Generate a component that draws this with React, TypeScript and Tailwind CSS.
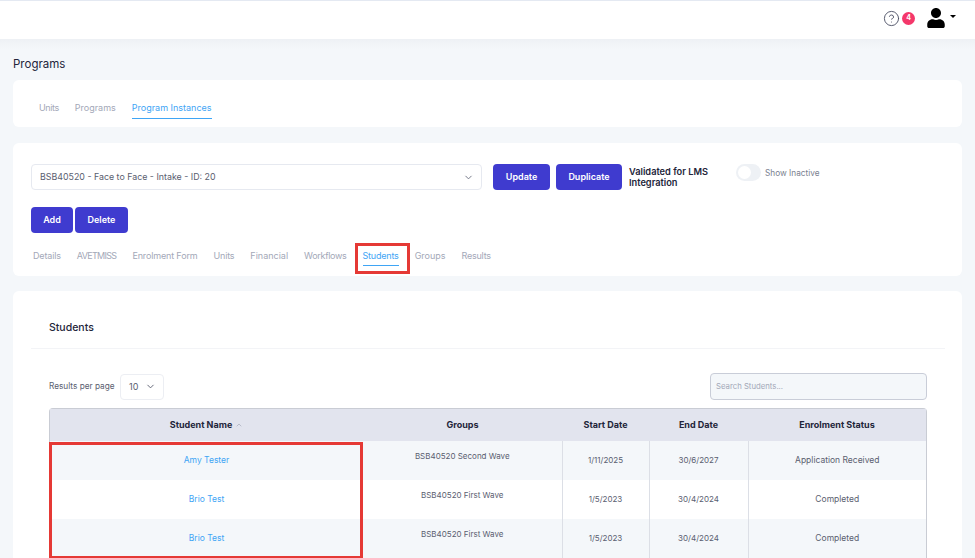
import React from "react";
import { ChevronDown, ChevronUp, CircleHelp } from "lucide-react";
import { FaUser } from "react-icons/fa";

const font = "font-['Inter','Open_Sans',sans-serif]";

function Tab({ label, active, boxed, track = "" }: { label: string; active?: boolean; boxed?: boolean; track?: string }) {
  return (
    <div className="relative">
      <div className={`${boxed ? "pb-[2px]" : "pb-[3px]"} border-b text-[9px] leading-[14px] ${track} ${active ? "text-[#3fa5f5] border-[#3fa5f5]" : "text-[#a3a8b8] border-transparent"}`}>
        {label}
      </div>
      {boxed && <div className="absolute left-[-8px] right-[-11px] top-[-6px] h-[31px] border-[3px] border-[#e53935]" />}
    </div>
  );
}

function Btn({ label, w }: { label: string; w: string }) {
  return (
    <div className={`${w} h-[26px] rounded-[4px] bg-[#3f3bcf] text-white text-[9px] font-semibold flex items-center justify-center`}>
      {label}
    </div>
  );
}

const rows = [
  ["Amy Tester", "BSB40520 Second Wave", "1/11/2025", "30/6/2027", "Application Received"],
  ["Brio Test", "BSB40520 First Wave", "1/5/2023", "30/4/2024", "Completed"],
  ["Brio Test", "BSB40520 First Wave", "1/5/2023", "30/4/2024", "Completed"],
];

export default function App() {
  return (
    <div className={`${font} relative h-[558px] w-[975px] overflow-hidden bg-[#f4f7fa]`}>
      <header className="h-[39px] bg-white border-t-[1px] border-[#e4e9f2] flex items-center justify-end pr-[19px] pb-[4px]">
        <CircleHelp size={17} strokeWidth={1.3} className="text-[#4a4f63]" />
        <div className="ml-[2px] w-[13px] h-[13px] rounded-full bg-[#f4376a] text-white text-[7px] font-bold flex items-center justify-center">4</div>
        <FaUser size={20} className="ml-[11px] text-black" />
        <div className="ml-[4px] mb-[4px] w-0 h-0 border-x-[3px] border-x-transparent border-t-[3px] border-t-black" />
      </header>

      <div className="h-[10px] -mb-[10px] bg-gradient-to-b from-[#eef1f5] to-[#f4f7fa]" />

      <main className="pl-[13px] w-[962px] box-border">
        <h1 className="pt-[17px] h-[41px] text-[11.5px] leading-[16px] text-[#23253a]">Programs</h1>

        <section className="h-[47px] bg-white rounded-[6px] pl-[26px] pt-[21px] flex gap-[16px]">
          <Tab label="Units" track="tracking-[-0.4px]" />
          <Tab label="Programs" />
          <Tab label="Program Instances" active />
        </section>

        <section className="mt-[16px] h-[133px] bg-white rounded-[6px] pl-[18px] pt-[21px]">
          <div className="flex items-start">
            <div className="w-[451px] h-[26px] rounded-[4px] border border-[#e6e9f0] flex items-center justify-between pl-[8px] pr-[7px] text-[8.85px] text-[#5a5e70]">
              <span>BSB40520 - Face to Face - Intake - ID: 20</span>
              <ChevronDown size={11} className="text-[#6b7080]" />
            </div>
            <div className="ml-[11px]"><Btn label="Update" w="w-[57px]" /></div>
            <div className="ml-[6px]"><Btn label="Duplicate" w="w-[66px]" /></div>
            <div className="ml-[7px] w-[96px] text-[9.25px] leading-[11px] font-semibold text-[#23253a] pt-[2px]">Validated for LMS Integration</div>
            <div className="ml-[11px] w-[25px] h-[17px] rounded-full bg-[#eef1f5] flex items-center pl-[2px]">
              <div className="w-[13px] h-[13px] rounded-full bg-white" />
            </div>
            <div className="ml-[4px] text-[8.25px] leading-[17px] text-[#7a7f90] mt-[1px]">Show Inactive</div>
          </div>

          <div className="mt-[17px] flex gap-[2px]">
            <Btn label="Add" w="w-[42px]" />
            <Btn label="Delete" w="w-[53px]" />
          </div>

          <div className="mt-[16px] ml-[2px] flex gap-[16px]">
            <Tab label="Details" track="tracking-[-0.15px]" />
            <Tab label="AVETMISS" track="tracking-[-0.7px]" />
            <Tab label="Enrolment Form" track="tracking-[-0.15px]" />
            <Tab label="Units" track="tracking-[-0.2px]" />
            <Tab label="Financial" />
            <Tab label="Workflows" track="tracking-[-0.3px]" />
            <Tab label="Students" active boxed track="tracking-[-0.2px]" />
            <Tab label="Groups" />
            <Tab label="Results" track="tracking-[-0.25px]" />
          </div>
        </section>

        <section className="mt-[15px] h-[280px] bg-white rounded-t-[6px] pl-[18px] pr-[17px]">
          <h2 className="pt-[30px] h-[58px] pl-[18px] text-[10.5px] leading-[14px] font-medium text-[#23253a] border-b border-[#f3f4f7]">Students</h2>

          <div className="mt-[24px] px-[18px] flex items-center justify-between">
            <div className="flex items-center">
              <span className="text-[8.25px] text-[#5a5e70] w-[71px]">Results per page</span>
              <div className="w-[44px] h-[26px] rounded-[4px] border border-[#eceef3] flex items-center justify-between pl-[8px] pr-[7px] text-[9px] text-[#5a5e70]">
                <span>10</span>
                <ChevronDown size={11} />
              </div>
            </div>
            <div className="w-[217px] h-[27px] rounded-[4px] border border-[#c9cdd8] bg-[#f4f7fa] flex items-center pl-[5px] text-[7.75px] text-[#a3a8b8]">
              Search Students...
            </div>
          </div>

          <div className="relative mt-[8px] mx-[18px] border-x border-t border-[#c9ccd4] rounded-t-[4px]">
            <table className="w-full table-fixed border-collapse">
              <colgroup>
                <col className="w-[313px]" />
                <col className="w-[199px]" />
                <col className="w-[87px]" />
                <col className="w-[99px]" />
                <col />
              </colgroup>
              <thead>
                <tr className="h-[32px] bg-[#e2e4ee] text-[9px] font-bold text-[#23253a]">
                  <th className="font-bold">
                    <span className="inline-flex items-center gap-[3px]">Student Name <ChevronUp size={8} className="text-[#a3a8b8]" /></span>
                  </th>
                  <th className="font-bold">Groups</th>
                  <th className="font-bold">Start Date</th>
                  <th className="font-bold">End Date</th>
                  <th className="font-bold">Enrolment Status</th>
                </tr>
              </thead>
              <tbody>
                {rows.map((r, i) => (
                  <tr key={i} className={`h-[39px] text-center leading-[12px] text-[#5a5e70] ${i % 2 === 0 ? "bg-[#f4f7fa]" : "bg-white"}`}>
                    <td className="pb-[1px] text-[#3fa5f5] text-[8.5px]">{r[0]}</td>
                    <td className="pb-[9px] text-[8px]">{r[1]}</td>
                    <td className="pb-[1px] border-l border-[#dcdfe6] text-[8px]">{r[2]}</td>
                    <td className="pb-[1px] border-l border-[#dcdfe6] text-[8px]">{r[3]}</td>
                    <td className="pb-[1px] border-l border-[#dcdfe6] text-[8.5px]">{r[4]}</td>
                  </tr>
                ))}
              </tbody>
            </table>
            <div className="absolute left-[-1px] top-[33px] w-[314px] h-[117px] border-[3px] border-[#e53935]" />
          </div>
        </section>
      </main>
    </div>
  );
}
